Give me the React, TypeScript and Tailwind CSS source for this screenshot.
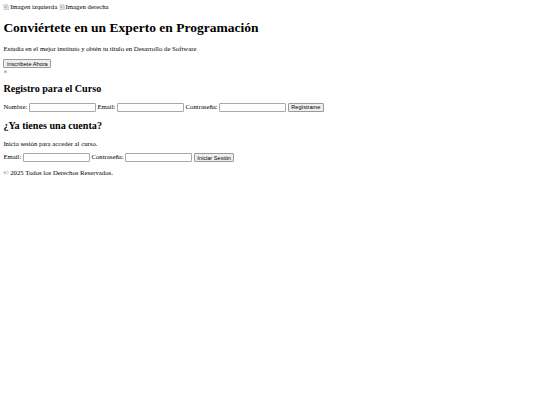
import React from "react";

function BrokenImage({ alt }: { alt: string }) {
  return (
    <span className="inline-flex items-center align-baseline">
      <svg width="6.75" height="6.75" viewBox="0 0 16 16" className="shrink-0">
        <path d="M2 1.5h8l3.5 3.5v3.5l-2 1.5-2-1.5-2 1.5-2-1.5-2 1.5-1.5-1z" fill="#f2f2f2" stroke="#9a9a9a" strokeWidth="1" />
        <path d="M2 12l1.5 1 2-1.5 2 1.5 2-1.5 2 1.5 2-1.5v3H2z" fill="#f2f2f2" stroke="#9a9a9a" strokeWidth="1" />
        <path d="M3.5 8l2.5-3 2.5 3z" fill="#5aa05a" />
        <circle cx="10" cy="4.5" r="1.2" fill="#4a86c8" />
      </svg>
      <span>{alt}</span>
    </span>
  );
}

const inputCls =
  "inline-block h-[8.9px] w-[66.7px] rounded-[1px] border border-[#a8a8a8] bg-white px-[1px] align-middle text-[5.625px]";
const btnCls =
  "inline-block rounded-[1px] border border-[#9a9a9a] bg-[#efefef] px-[2.5px] py-[0.5px] align-middle font-['Liberation_Sans',Arial,sans-serif] text-[5.625px] leading-[normal] text-black";

export default function App() {
  return (
    <div className="min-h-[405px] bg-white p-[3.375px] font-['Liberation_Serif','Times_New_Roman',serif] text-[6.75px] leading-[normal] text-black">
      <header>
        <BrokenImage alt="Imagen izquierda" /> <BrokenImage alt="Imagen derecha" />
      </header>
      <h1 className="my-[9.05px] text-[13.5px] font-bold leading-[normal]">
        Conviértete en un Experto en Programación
      </h1>
      <p className="my-[6.75px]">
        Estudia en el mejor instituto y obtén tu título en Desarrollo de Software
      </p>
      <button className={btnCls}>Inscríbete Ahora</button>
      <div>×</div>
      <h2 className="my-[8.4px] text-[10.125px] font-bold leading-[normal]">Registro para el Curso</h2>
      <form>
        Nombre: <input type="text" className={inputCls} /> Email:{" "}
        <input type="email" className={inputCls} /> Contraseña:{" "}
        <input type="password" className={inputCls} /> <button className={btnCls}>Regístrame</button>
      </form>
      <h2 className="my-[8.4px] text-[10.125px] font-bold leading-[normal]">¿Ya tienes una cuenta?</h2>
      <p className="my-[6.75px]">Inicia sesión para acceder al curso.</p>
      <form>
        Email: <input type="email" className={inputCls} /> Contraseña:{" "}
        <input type="password" className={inputCls} /> <button className={btnCls}>Iniciar Sesión</button>
      </form>
      <footer>
        <p className="my-[6.75px]">© 2025 Todos los Derechos Reservados.</p>
      </footer>
    </div>
  );
}
